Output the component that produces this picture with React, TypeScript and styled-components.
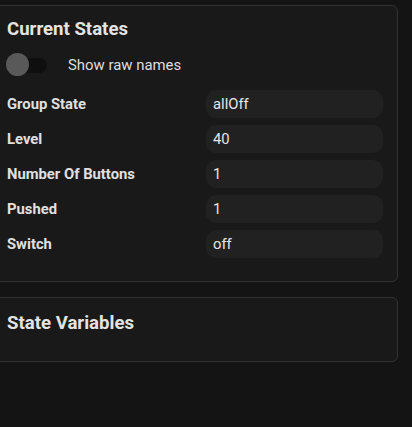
import styled, { createGlobalStyle } from "styled-components";

const GlobalStyle = createGlobalStyle`
  html, body {
    margin: 0;
    padding: 0;
    background: #141414;
    font-family: Roboto, "Liberation Sans", sans-serif;
    color: #e2e2e2;
  }
`;

const Page = styled.div`
  padding-top: 5px;
  width: 412px;
  height: 427px;
  box-sizing: border-box;
  overflow: hidden;
`;

const Card = styled.section<{ top: number; bottom: number }>`
  margin-left: -11px;
  width: 409px;
  box-sizing: border-box;
  border: 1px solid #333333;
  border-radius: 6px;
  background: #191919;
  padding: ${(props) => props.top}px 15px ${(props) => props.bottom}px 17px;

  & + & {
    margin-top: 15px;
  }
`;

const Title = styled.h2`
  margin: 0;
  font-size: 18.6px;
  line-height: 24px;
  font-weight: 700;
  color: #e4e4e4;
`;

const ToggleRow = styled.label`
  display: flex;
  align-items: center;
  height: 24px;
  margin-top: 12px;
  font-size: 14.9px;
  color: #dedede;
`;

const Switch = styled.div`
  position: relative;
  width: 42px;
  height: 24px;
  flex-shrink: 0;
  margin-left: -1px;
`;

const Track = styled.div`
  position: absolute;
  left: 4px;
  top: 5px;
  width: 37px;
  height: 15px;
  border-radius: 8px;
  background: #0f0f0f;
`;

const Thumb = styled.div`
  position: absolute;
  left: 0;
  top: 0;
  width: 23px;
  height: 23px;
  border-radius: 50%;
  background: #595959;
`;

const ToggleText = styled.span`
  margin-left: 20px;
`;

const StateGrid = styled.div`
  display: grid;
  grid-template-columns: 199px 177px;
  row-gap: 7px;
  margin-top: 13px;
`;

const Label = styled.div`
  display: flex;
  align-items: center;
  height: 28px;
  font-size: 14.8px;
  font-weight: 700;
  color: #e0e0e0;
`;

const Value = styled.div`
  display: flex;
  align-items: center;
  height: 28px;
  padding: 0 7px;
  border-radius: 10px;
  background: #212121;
  font-size: 14.8px;
  color: #e6e6e6;
`;

const states = [
  { name: "Group State", value: "allOff" },
  { name: "Level", value: "40" },
  { name: "Number Of Buttons", value: "1" },
  { name: "Pushed", value: "1" },
  { name: "Switch", value: "off" },
];

export default function App() {
  return (
    <>
      <GlobalStyle />
      <Page>
        <Card top={11} bottom={23}>
          <Title>Current States</Title>
          <ToggleRow>
            <Switch>
              <Track />
              <Thumb />
            </Switch>
            <ToggleText>Show raw names</ToggleText>
          </ToggleRow>
          <StateGrid>
            {states.map((s) => (
              <>
                <Label key={s.name + "-l"}>{s.name}</Label>
                <Value key={s.name + "-v"}>{s.value}</Value>
              </>
            ))}
          </StateGrid>
        </Card>
        <Card top={13} bottom={26}>
          <Title>State Variables</Title>
        </Card>
      </Page>
    </>
  );
}
